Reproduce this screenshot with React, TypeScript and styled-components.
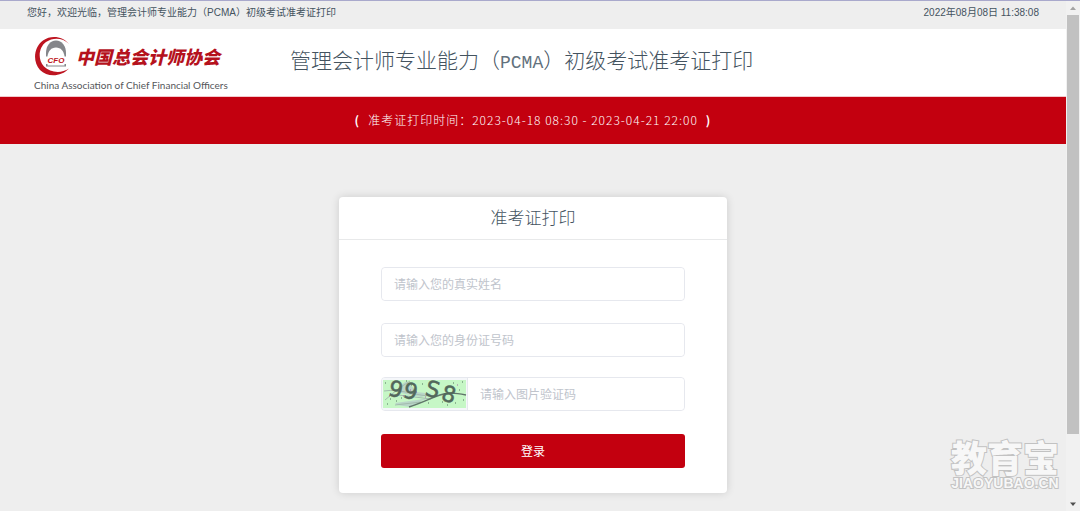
import React from 'react';
import styled, { createGlobalStyle } from 'styled-components';

const sans = `'Liberation Sans', 'Noto Sans CJK SC', sans-serif`;
const cjk = `'Noto Sans CJK SC', 'Liberation Sans', sans-serif`;
const red = '#c3000f';
const ink = '#44535f';

const GlobalStyle = createGlobalStyle`
  * { box-sizing: border-box; }
  body { margin: 0; background: #eee; color: ${ink}; font-family: ${sans}; }
  h1, h2, p { margin: 0; font-weight: inherit; }
`;

const Shell = styled.div`
  display: grid;
  grid-template-columns: minmax(0, 1fr) 14px;
  min-height: 100vh;
  border-top: 1px solid #a9a9cc;
`;

const Page = styled.div`
  position: relative;
  display: flex;
  flex-direction: column;
`;

const TopBar = styled.div`
  display: flex;
  justify-content: space-between;
  align-items: center;
  height: 28px;
  padding: 0 27px 4px;
  background: #eee;
  font-size: 10px;
  line-height: 16px;
`;

const Header = styled.header`
  display: flex;
  align-items: flex-start;
  gap: 56px;
  height: 68px;
  padding: 7px 34px 0;
  background: #fff;
  border-bottom: 1px solid #f3c9cc;
`;

const LogoLink = styled.a`
  display: block;
  flex: none;
  svg { display: block; }
`;

const Title = styled.h1`
  padding-top: 7px;
  font-family: ${cjk};
  font-size: 21px;
  font-weight: 300;
  line-height: 32px;
  white-space: nowrap;
`;

const Abbr = styled.span`
  font-family: 'Liberation Mono', monospace;
  font-size: 18px;
  color: #62717d;
`;

const Notice = styled.div`
  display: flex;
  justify-content: center;
  align-items: center;
  gap: 8px;
  height: 47px;
  padding-bottom: 2px;
  background: ${red};
  color: #fff;
  font-family: ${cjk};
  font-size: 12px;
  font-weight: 300;
  line-height: 20px;
  letter-spacing: 1px;
`;

const Bracket = styled.span`
  font-weight: 700;
`;

const Main = styled.main`
  display: flex;
  justify-content: center;
  padding: 53px 20px 18px;
`;

const Card = styled.form`
  width: 388px;
  background: #fff;
  border-radius: 4px;
  box-shadow: 0 0 8px rgba(0, 0, 0, 0.14);
`;

const CardTitle = styled.h2`
  padding: 4px 0 6px;
  border-bottom: 1px solid #e8e9ea;
  font-family: ${cjk};
  font-size: 17px;
  font-weight: 300;
  line-height: 32px;
  text-align: center;
`;

const Fields = styled.div`
  display: flex;
  flex-direction: column;
  padding: 27px 42px 25px;
`;

const Field = styled.div<{ $gap: number }>`
  display: flex;
  height: 34px;
  margin-bottom: ${(p) => p.$gap}px;
  border: 1px solid #e6e8ee;
  border-radius: 4px;
`;

const TextInput = styled.input`
  flex: 1;
  min-width: 0;
  padding: 0 12px 1px;
  border: 0;
  border-radius: 4px;
  outline: 0;
  background: #fff;
  font-family: ${cjk};
  font-size: 12px;
  color: ${ink};
  &::placeholder { color: #c0c4cc; opacity: 1; }
`;

const CaptchaButton = styled.button`
  flex: none;
  width: 86px;
  padding: 0 1px;
  border: 0;
  border-right: 1px solid #e6e8ee;
  border-radius: 3px 0 0 3px;
  background: #f5f7fa;
  cursor: pointer;
  svg { display: block; overflow: visible; }
`;

const LoginButton = styled.button`
  height: 34px;
  padding-bottom: 2px;
  border: 0;
  border-radius: 3px;
  background: ${red};
  color: #fff;
  font-family: ${cjk};
  font-size: 12px;
  cursor: pointer;
`;

const Watermark = styled.div`
  position: absolute;
  right: 7px;
  bottom: 20px;
  display: flex;
  flex-direction: column;
  align-items: center;
  color: #f7f7f7;
  font-weight: 900;
  paint-order: stroke fill;
  -webkit-text-stroke: 2px #c2c2c2;
  pointer-events: none;
`;

const WatermarkName = styled.span`
  font-family: ${cjk};
  font-size: 36px;
  line-height: 38px;
`;

const WatermarkSite = styled.span`
  font-size: 14px;
  line-height: 16px;
`;

const ScrollRail = styled.div`
  display: flex;
  flex-direction: column;
  background: #f1f1f1;
  svg { display: block; flex: none; }
`;

const ScrollTrack = styled.div`
  flex: 1;
  padding: 0 1px;
`;

const ScrollThumb = styled.div`
  height: 87%;
  background: #c1c1c1;
`;

function Logo() {
  return (
    <svg width="200" height="58" viewBox="0 0 200 58" role="img" aria-label="中国总会计师协会">
      <path d="M35 8C29 0.500 17.500-1.500 9 4.500C-0.500 11.500-1.500 26 6 34C13.500 41.500 27 41 35 32.500C27 38 16 36.500 10 30.500C3.500 23.500 4.500 11.500 12 6C19 1 29 1.500 35 8Z" fill="#bd1420" />
      <path d="M12 30.500V17C12 10 16 4.500 22 4.500C28 4.500 32 10 32 17V30.500Z" fill="#85868a" />
      <path d="M13.500 29.500V20C14.500 15 17 11.500 22 11.500C27 11.500 29.500 15 30.500 20V29.500Z" fill="#fff" />
      <path d="M12 20.500H34V28H12Z" fill="#fff" />
      <text x="22" y="27" textAnchor="middle" fontFamily="Liberation Sans, sans-serif" fontSize="8" fontWeight="700" fontStyle="italic" fill="#bd1420">CFO</text>
      <text x="42" y="28" fontFamily="Noto Sans CJK SC, sans-serif" fontSize="18" fontWeight="900" fontStyle="italic" fill="#b5121d">中国总会计师协会</text>
      <text x="0" y="53" fontFamily="Lato, sans-serif" fontSize="10" fill="#55565a">China Association of Chief Financial Officers</text>
    </svg>
  );
}

function Captcha() {
  return (
    <svg width="83" height="28" viewBox="0 0 83 28" aria-hidden="true">
      <path d="M0 0H83V28H0Z" fill="#c6f7c6" />
      <path d="M16 6L24 1L34 12L50 14L38 17L18 13ZM12 23L34 20L50 17L38 21L27 27L14 25Z" fill="#b9d6c8" />
      <g fill="none" stroke="#a3bbae" strokeWidth="1">
        <path d="M1 11C18 8 35 17 51 16M2 20L15 9L27 1M7 14L48 19M12 25L38 22" />
      </g>
      <path d="M26 27C39 23 48 18 57 15S72 13 83 15" fill="none" stroke="#60756a" strokeWidth="1.500" />
      <path d="M2 3h1M7 19h1M13 21h1M23 1h1M28 5h1M39 4h1M45 23h1M55 4h1M59 22h1M70 3h1M76 10h1M79 2h1M80 20h1M72 23h1M64 25h1M18 18h1M4 24h1" stroke="#51735d" />
      <path d="M33 12h1M27 10h1M42 17h1M6 16h1M74 5h1M20 16h1" stroke="#a565a5" />
      <g fontFamily="DejaVu Sans, sans-serif" fontSize="22" fill="#52685b" stroke="#52685b" strokeWidth="0.500">
        <text x="6" y="17" transform="rotate(14 13 9)">9</text>
        <text x="21" y="19" transform="rotate(14 28 10)">9</text>
        <text x="43" y="17" transform="rotate(14 50 9)">S</text>
        <text x="59" y="22" transform="rotate(14 66 14)">8</text>
      </g>
    </svg>
  );
}

export default function App() {
  return (
    <>
      <GlobalStyle />
      <Shell>
        <Page>
          <TopBar>
            <p>您好，欢迎光临，管理会计师专业能力（PCMA）初级考试准考证打印</p>
            <time dateTime="2022-08-08T11:38:08">2022年08月08日 11:38:08</time>
          </TopBar>
          <Header>
            <LogoLink href="#"><Logo /></LogoLink>
            <Title>管理会计师专业能力（<Abbr>PCMA</Abbr>）初级考试准考证打印</Title>
          </Header>
          <Notice>
            <Bracket>(</Bracket>
            <p>准考证打印时间：2023-04-18 08:30 - 2023-04-21 22:00</p>
            <Bracket>)</Bracket>
          </Notice>
          <Main>
            <Card onSubmit={(e) => e.preventDefault()}>
              <CardTitle>准考证打印</CardTitle>
              <Fields>
                <Field $gap={22}>
                  <TextInput type="text" aria-label="真实姓名" placeholder="请输入您的真实姓名" />
                </Field>
                <Field $gap={20}>
                  <TextInput type="text" aria-label="身份证号码" placeholder="请输入您的身份证号码" />
                </Field>
                <Field $gap={23}>
                  <CaptchaButton type="button" aria-label="图片验证码"><Captcha /></CaptchaButton>
                  <TextInput type="text" aria-label="验证码" placeholder="请输入图片验证码" />
                </Field>
                <LoginButton type="submit">登录</LoginButton>
              </Fields>
            </Card>
          </Main>
          <Watermark>
            <WatermarkName>教育宝</WatermarkName>
            <WatermarkSite>JIAOYUBAO.CN</WatermarkSite>
          </Watermark>
        </Page>
        <ScrollRail aria-hidden="true">
          <svg width="14" height="14" viewBox="0 0 14 14"><path d="M4 9L7 5.500L10 9Z" fill="#a3a3a3" /></svg>
          <ScrollTrack><ScrollThumb /></ScrollTrack>
          <svg width="14" height="14" viewBox="0 0 14 14"><path d="M4 5.500H10L7 9Z" fill="#505050" /></svg>
        </ScrollRail>
      </Shell>
    </>
  );
}
